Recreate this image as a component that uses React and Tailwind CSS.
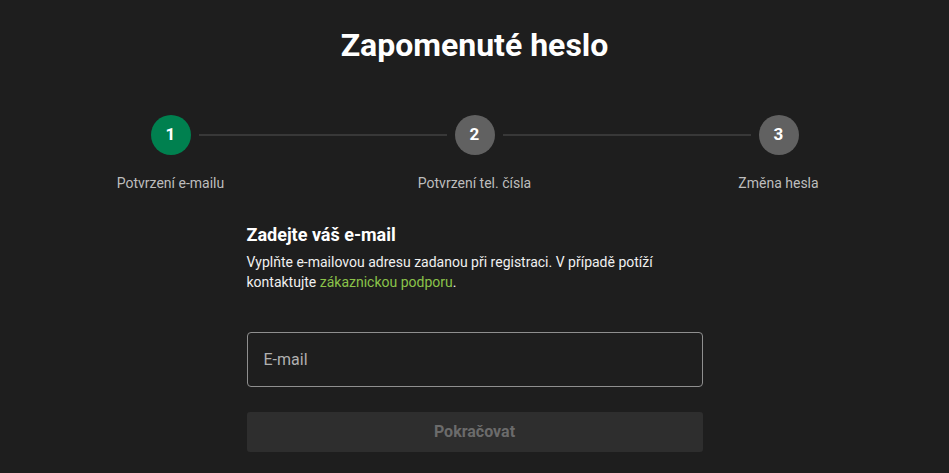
import React from 'react'

const steps = [
  { n: 1, label: 'Potvrzení e-mailu', active: true },
  { n: 2, label: 'Potvrzení tel. čísla' },
  { n: 3, label: 'Změna hesla' },
]

function Stepper() {
  return (
    <div className="flex w-[912px] mx-auto">
      {steps.map((s, i) => (
        <div key={s.n} className="flex-1 flex flex-col items-center relative">
          {/* connector to next step */}
          {i < steps.length - 1 && (
            <div className="absolute top-[19px] left-[calc(50%+28px)] w-[248px] h-[2px] bg-[#383838]" />
          )}
          <div
            className={`w-10 h-10 rounded-full flex items-center justify-center text-[17px] font-bold text-white ${
              s.active ? 'bg-[#00804f]' : 'bg-[#616161]'
            }`}
          >
            {s.n}
          </div>
          <div className="mt-[18px] text-[14px] leading-5 text-[#bdbdbd]">{s.label}</div>
        </div>
      ))}
    </div>
  )
}

export default function App() {
  return (
    <div className="min-h-[473px] bg-[#1e1e1e] font-['Roboto',sans-serif] pt-[22px]">
      <h1 className="text-center text-[32px] leading-[46px] font-bold text-white">Zapomenuté heslo</h1>

      <div className="mt-[47px]">
        <Stepper />
      </div>

      <div className="w-[456px] mx-auto mt-[29px]">
        <h2 className="text-[18px] leading-[26px] font-bold text-white">Zadejte váš e-mail</h2>
        <p className="mt-[4px] text-[14px] leading-[20px] text-[#f0f0f0]">
          Vyplňte e-mailovou adresu zadanou při registraci. V případě potíží kontaktujte{' '}
          <a href="#" className="text-[#8bc34a]">zákaznickou podporu</a>.
        </p>

        <div className="mt-[40px] h-[55px] border border-[#8f8f8f] rounded-[4px] flex items-center px-4">
          <span className="text-[16px] text-[#b0b0b0]">E-mail</span>
        </div>

        <button
          disabled
          className="mt-[25px] w-full h-[40px] rounded-[3px] bg-[#2e2e2e] text-[16px] font-bold text-[#6b6b6b]"
        >
          Pokračovat
        </button>
      </div>
    </div>
  )
}
